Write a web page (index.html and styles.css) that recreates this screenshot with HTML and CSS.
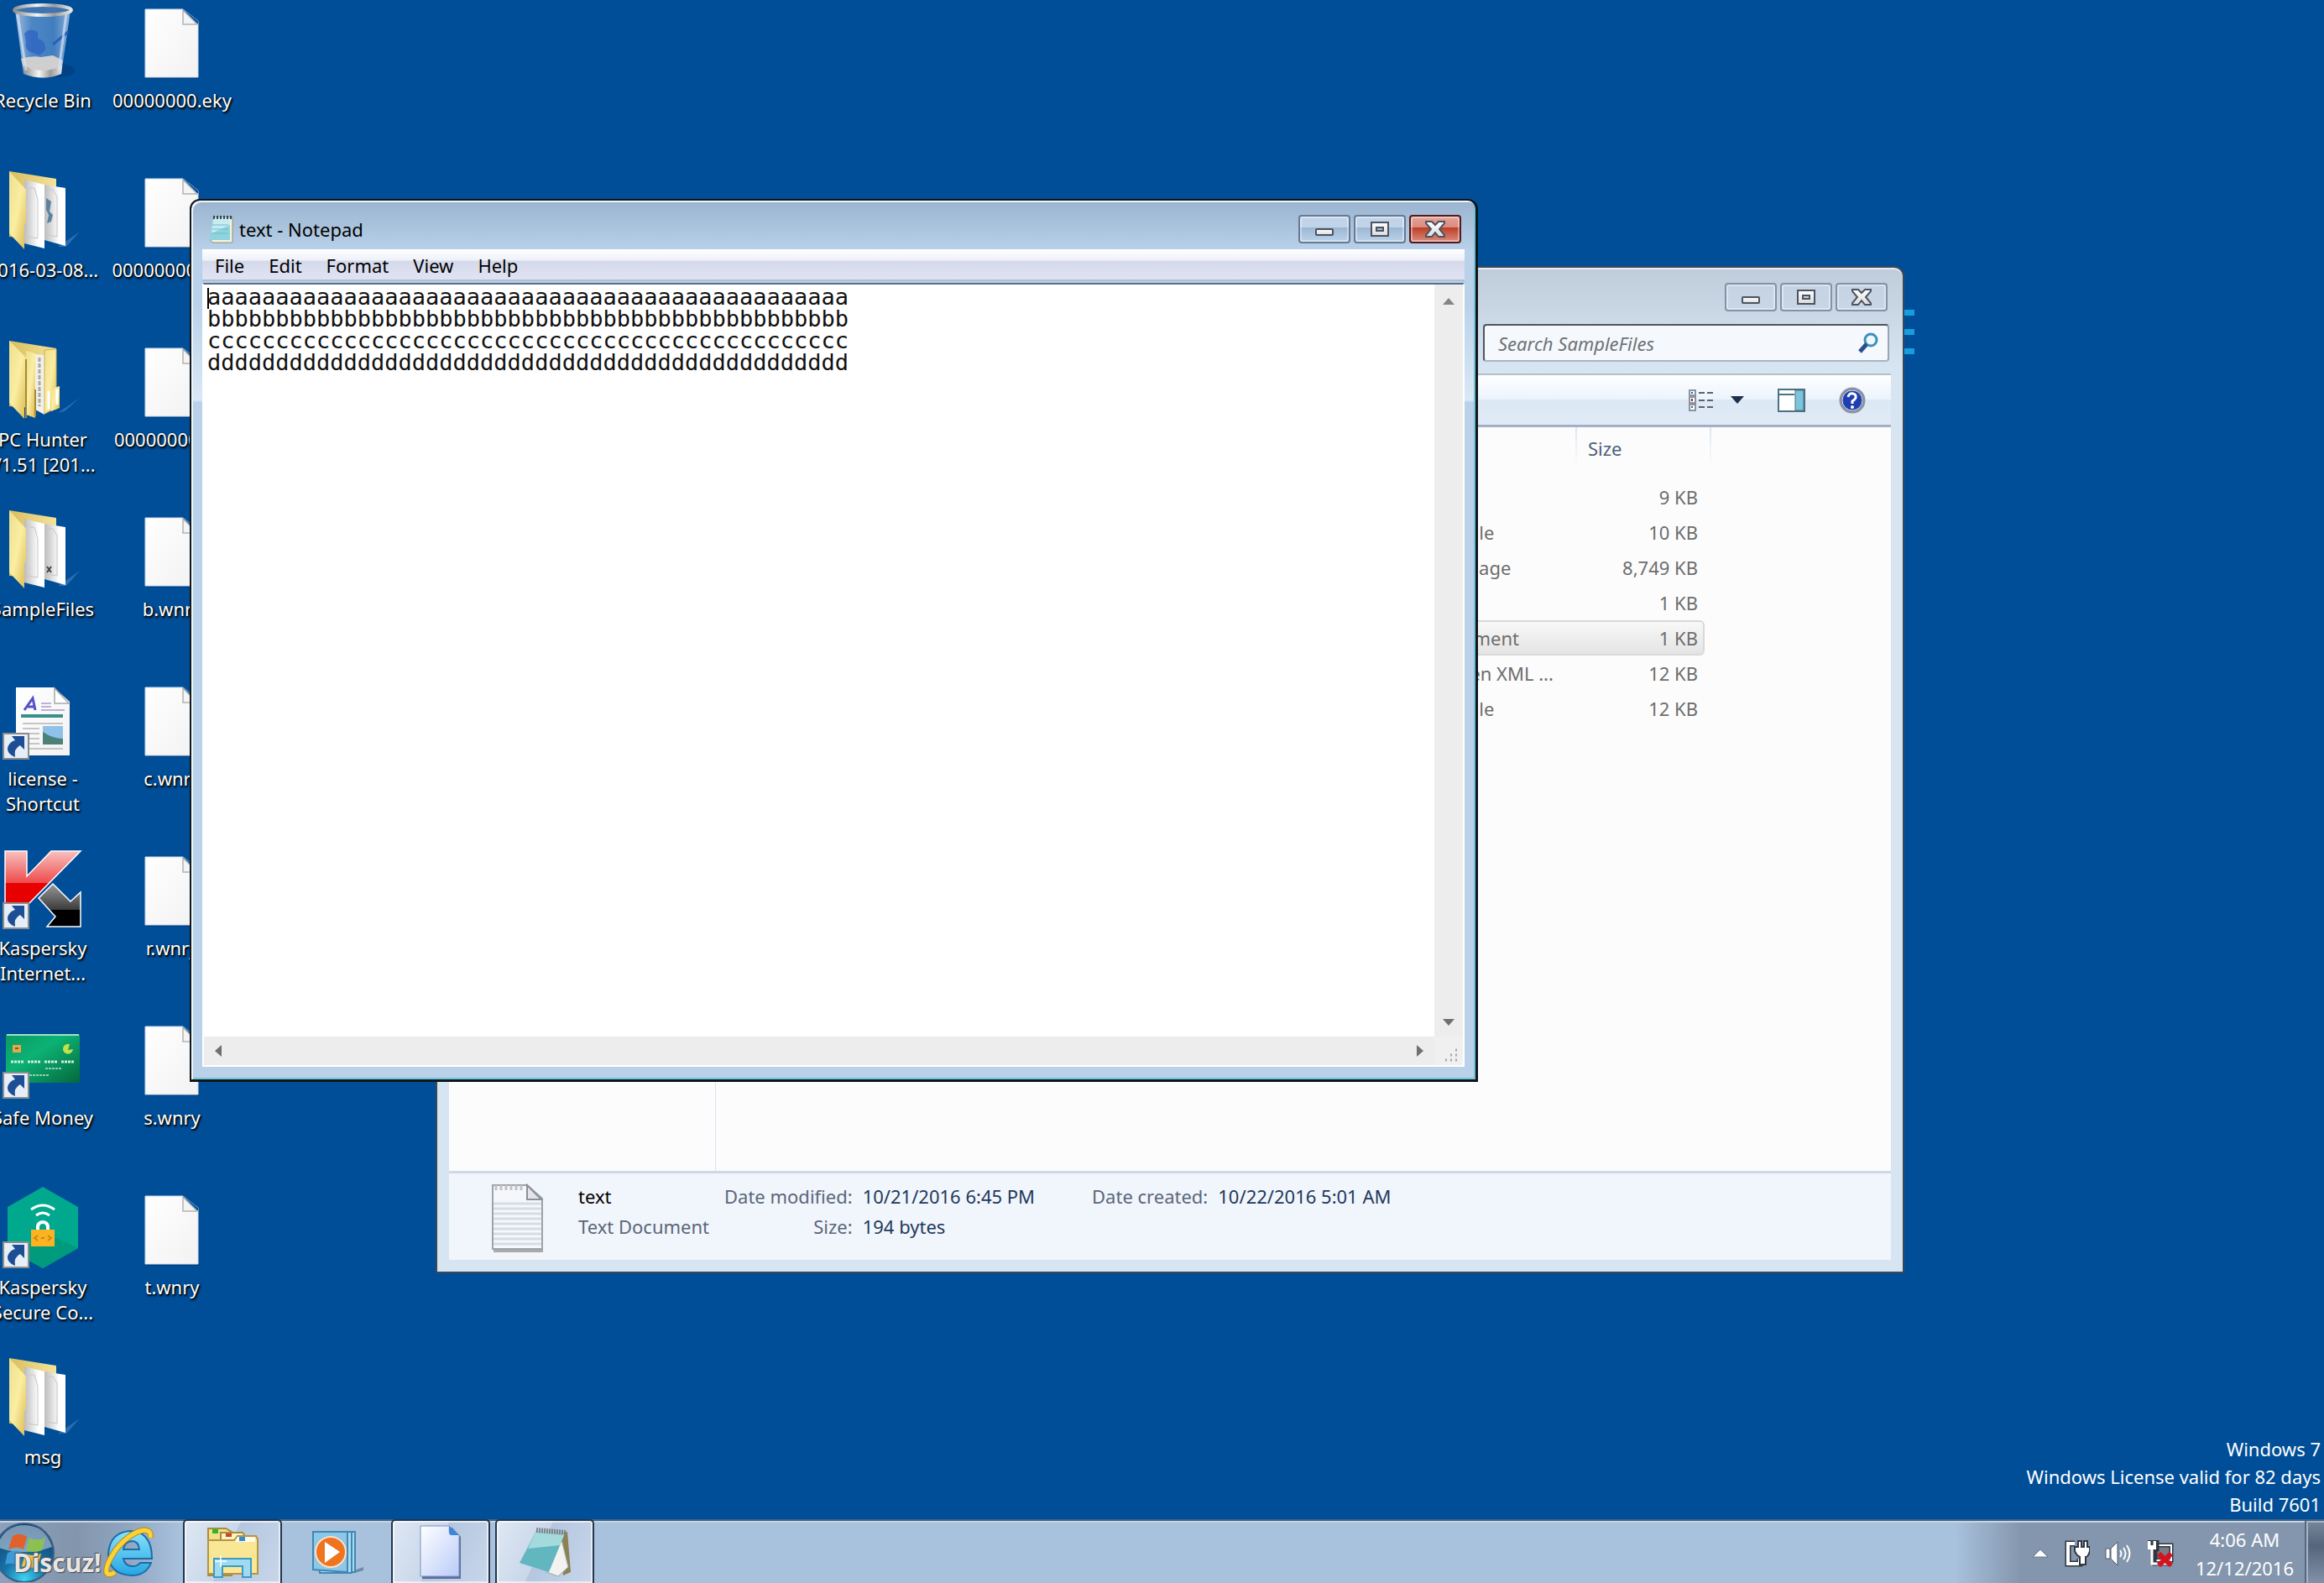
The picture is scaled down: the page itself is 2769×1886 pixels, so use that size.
FILE: index.html
```html
<!DOCTYPE html>
<html lang="en">

<head>
    <meta charset="UTF-8">
    <meta name="viewport" content="width=device-width, initial-scale=1.0">
    <title>Desktop</title>
    <link rel="stylesheet" href="styles.css">
</head>

<body>
    <!-- shared icons -->
    <svg class="defs" aria-hidden="true">
        <defs>
            <linearGradient id="gPaper" x1="0" y1="0" x2="1" y2="1">
                <stop offset="0" stop-color="#fff" />
                <stop offset="1" stop-color="#f3f2f2" />
            </linearGradient>
            <linearGradient id="gFolder" x1="0" y1="0" x2="1" y2="1">
                <stop offset="0" stop-color="#efdf8e" />
                <stop offset=".5" stop-color="#fbeea2" />
                <stop offset="1" stop-color="#dcb950" />
            </linearGradient>
            <linearGradient id="gFolderBack" x1="0" y1="0" x2="1" y2="0">
                <stop offset="0" stop-color="#d9be5c" />
                <stop offset="1" stop-color="#f3e39a" />
            </linearGradient>
            <linearGradient id="gSheet" x1="0" y1="0" x2="1" y2="0">
                <stop offset="0" stop-color="#bdbdbd" />
                <stop offset=".7" stop-color="#fff" />
                <stop offset="1" stop-color="#fff" />
            </linearGradient>
            <linearGradient id="gGlyph" x1="0" y1="0" x2="0" y2="1">
                <stop offset="0" stop-color="#fff" />
                <stop offset="1" stop-color="#dcdcdc" />
            </linearGradient>
        </defs>
        <symbol id="doc" viewBox="0 0 96 100">
            <path d="M17 12H62L80 27V94H17Z" fill="#00306a" opacity=".5" />
            <path d="M16 11H61L79 25V92H16Z" fill="url(#gPaper)" stroke="#c9dcf2" stroke-width="1" />
            <path d="M61 11L79 25V28H62Z" fill="#004e98" />
            <path d="M61 12V29H78Z" fill="#f4f4f4" stroke="#b3b3b3" stroke-width="1.5" />
        </symbol>
        <symbol id="shortcut" viewBox="0 0 32 32">
            <path d="M1 1H31V31H1Z" fill="#e6eef8" stroke="#8c8c8c" stroke-width="2" />
            <path d="M11 4H26V20L21 15Q13 19 15 29Q5 25 6 18Q8 11 15 9Z" fill="#1d4d94" />
        </symbol>
        <symbol id="folder" viewBox="0 0 96 100">
            <path d="M66 92L92 74L76 92Z" fill="#7fa9dc" opacity=".35" />
            <path d="M8 2L64 11V84L8 80Z" fill="url(#gFolderBack)" />
            <path d="M26 12L50 18V94L26 88Z" fill="url(#gSheet)" />
            <path d="M50 18L75 22V91L50 84Z" fill="url(#gSheet)" />
            <path d="M32 22L38 22L42 36V82L30 80M53 24L60 24L65 32V80L53 78" fill="none" stroke="#c6c6c6" stroke-width="1" />
            <path d="M8 2L28 24V62L26 66V95L8 76Z" fill="url(#gFolder)" />
        </symbol>
        <symbol id="min" viewBox="0 0 62 34">
            <rect x="21" y="17" width="20" height="7" rx="1" fill="url(#gGlyph)" stroke="#4b5361" stroke-width="2" />
        </symbol>
        <symbol id="max" viewBox="0 0 62 34">
            <path d="M21 9H41V25H21ZM27 15V19H35V15Z" fill="url(#gGlyph)" fill-rule="evenodd" stroke="#4b5361" stroke-width="2" />
        </symbol>
        <symbol id="close" viewBox="0 0 62 34">
            <path d="M20 8H27L31 12L35 8H42V10L36 17L42 24V26H35L31 21L27 26H20V24L26 17L20 10Z" fill="url(#gGlyph)" stroke="#4b5361" stroke-width="2" />
        </symbol>
    </svg>

    <main class="desktop">
        <nav class="icons" aria-label="Desktop icons">
            <a class="icon" href="#">
                <svg viewBox="0 0 96 100">
                    <defs>
                        <linearGradient id="gBin" x1="0" y1="0" x2="1" y2="0">
                            <stop offset="0" stop-color="#b8cfe8" />
                            <stop offset=".3" stop-color="#5a90cc" />
                            <stop offset=".7" stop-color="#4d86c6" />
                            <stop offset="1" stop-color="#a8c4e2" />
                        </linearGradient>
                        <linearGradient id="gRim" x1="0" y1="0" x2="1" y2="0">
                            <stop offset="0" stop-color="#8f8f8f" />
                            <stop offset=".4" stop-color="#f5f5f5" />
                            <stop offset=".7" stop-color="#9b9b9b" />
                            <stop offset="1" stop-color="#e8e8e8" />
                        </linearGradient>
                    </defs>
                    <ellipse cx="66" cy="84" rx="20" ry="8" fill="#003a78" opacity=".6" />
                    <path d="M15 12L25 88Q48 97 70 88L81 12Z" fill="url(#gBin)" opacity=".85" />
                    <path d="M26 40Q32 32 42 38V46Q52 48 51 60L44 66L34 62Q26 60 28 50Z" fill="#2b5fc2" opacity=".7" />
                    <path d="M60 53L78 38" stroke="#2562b8" stroke-width="3" />
                    <path d="M22 70Q34 66 46 68L60 66L72 72L70 82Q48 92 25 82Z" fill="#cfcfd0" />
                    <path d="M25 78Q48 90 71 78L70 88Q48 97 26 88Z" fill="url(#gRim)" />
                    <path d="M18 16L28 84M76 16L67 84" stroke="#d5e4f4" stroke-width="3" opacity=".7" />
                    <ellipse cx="48" cy="12" rx="34" ry="6" fill="#3f74b0" stroke="url(#gRim)" stroke-width="4" />
                </svg>
                <span>Recycle Bin</span>
            </a>
            <a class="icon" href="#">
                <svg viewBox="0 0 96 100">
                    <use href="#folder" />
                    <path d="M52 34L58 38L56 50L60 54L58 62L53 64L55 54L52 48Z" fill="#5d83a0" />
                </svg>
                <span>2016-03-08...</span>
            </a>
            <a class="icon" href="#">
                <svg viewBox="0 0 96 100">
                    <path d="M66 88L92 70L74 86Z" fill="#7fa9dc" opacity=".35" />
                    <path d="M8 2L64 11V84L8 80Z" fill="url(#gFolderBack)" />
                    <path d="M28 14L39 17V94L28 90Z" fill="url(#gFolder)" />
                    <path d="M39 18L50 19V90L39 84Z" fill="#f2f0ea" />
                    <path d="M44 22V80" stroke="#a9a9a2" stroke-width="3" stroke-dasharray="5 2" />
                    <path d="M50 13L64 12V82L50 89Z" fill="url(#gFolder)" stroke="#d0b050" />
                    <path d="M62 58L68 56V82L58 86V62Z" fill="url(#gFolder)" />
                    <path d="M55 62V84M65 60V78" stroke="#fff" stroke-width="3" />
                    <path d="M8 2L28 22V60L26 64V95L8 76Z" fill="url(#gFolder)" />
                    <path d="M28 24V94M39 60V92" stroke="#a88a35" stroke-width="2" />
                </svg>
                <span>PC Hunter V1.51 [201...</span>
            </a>
            <a class="icon" href="#">
                <svg viewBox="0 0 96 100">
                    <use href="#folder" />
                    <path d="M53 69L58 76M58 69L53 76" stroke="#444" stroke-width="2" />
                </svg>
                <span>SampleFiles</span>
            </a>
            <a class="icon" href="#">
                <svg viewBox="0 0 96 100">
                    <path d="M16 11H61L80 28V92H16Z" fill="url(#gPaper)" />
                    <path d="M62 12V30H79Z" fill="#fff" stroke="#a9a9a9" stroke-width="1.5" />
                    <path d="M26 38L36 24L39 38M30 34H38" fill="none" stroke="#5550c8" stroke-width="3" />
                    <path d="M46 30H58M46 34H58M46 38H74" stroke="#a79ad0" stroke-width="1.5" />
                    <rect x="22" y="43" width="50" height="4" fill="#3a8f8c" />
                    <path d="M24 54H72M24 60H44M24 66H44M24 72H44M24 78H44M24 84H72" stroke="#b5b5b5" stroke-width="1.5" />
                    <rect x="48" y="57" width="24" height="22" fill="#8fc1ea" />
                    <path d="M48 64Q60 72 72 72V79H48Z" fill="#4c8078" />
                    <use href="#shortcut" x="0" y="65" width="32" height="32" />
                </svg>
                <span>license - Shortcut</span>
            </a>
            <a class="icon" href="#">
                <svg viewBox="0 0 96 100">
                    <defs>
                        <linearGradient id="gRed" x1="0" y1="0" x2="0" y2="1">
                            <stop offset="0" stop-color="#f9c0c0" />
                            <stop offset=".62" stop-color="#ee4a4a" />
                            <stop offset=".62" stop-color="#e60000" />
                            <stop offset="1" stop-color="#e60000" />
                        </linearGradient>
                        <linearGradient id="gBlack" x1="0" y1="0" x2="0" y2="1">
                            <stop offset="0" stop-color="#9a9a9a" />
                            <stop offset=".6" stop-color="#3c3c3c" />
                            <stop offset=".6" stop-color="#000" />
                            <stop offset="1" stop-color="#000" />
                        </linearGradient>
                    </defs>
                    <path d="M3 4H29V34L58 4H93L32 66H3Z" fill="url(#gRed)" stroke="#fff" stroke-width="1.5" />
                    <path d="M43 60L60 43L81 64L93 53V94H53L63 82Z" fill="url(#gBlack)" stroke="#fff" stroke-width="1.5" />
                    <use href="#shortcut" x="0" y="65" width="32" height="32" />
                </svg>
                <span>Kaspersky Internet...</span>
            </a>
            <a class="icon" href="#">
                <svg viewBox="0 0 96 100">
                    <defs>
                        <linearGradient id="gCard" x1="0" y1="0" x2="1" y2="1">
                            <stop offset="0" stop-color="#0a9a62" />
                            <stop offset=".4" stop-color="#0cb274" />
                            <stop offset="1" stop-color="#04683c" />
                        </linearGradient>
                    </defs>
                    <rect x="4" y="20" width="88" height="58" rx="2" fill="url(#gCard)" />
                    <path d="M5 21H91" stroke="#9fe3c8" stroke-width="2" />
                    <rect x="12" y="33" width="10" height="9" fill="#e8a848" />
                    <path d="M15 37H19" stroke="#7b5a20" stroke-width="2" />
                    <path d="M80 32A6 6 0 1 0 84 38L78 39Z" fill="#c4e04a" />
                    <path d="M10 53H26M30 53H46M50 53H66M70 53H86" stroke="#cdeedd" stroke-width="3" stroke-dasharray="3 1" />
                    <path d="M51 61H70M32 69H56" stroke="#8fd0b2" stroke-width="2" stroke-dasharray="3 1" />
                    <use href="#shortcut" x="0" y="65" width="32" height="32" />
                </svg>
                <span>Safe Money</span>
            </a>
            <a class="icon" href="#">
                <svg viewBox="0 0 96 100">
                    <path d="M48 0L90 24V73L48 97L6 73V24Z" fill="#00a88e" />
                    <path d="M62 60L90 73L48 97L28 86V70Z" fill="#009a7c" />
                    <path d="M34 27Q48 17 62 27M40 34Q48 28 56 34" fill="none" stroke="#fff" stroke-width="3" />
                    <path d="M42 52V47Q43 42 48 42Q53 42 54 47V52" fill="none" stroke="#fff" stroke-width="4" />
                    <rect x="34" y="51" width="28" height="20" fill="#fbb322" />
                    <path d="M42 58L38 61L42 64M54 58L58 61L54 64M46 61H50" fill="none" stroke="#c78a10" stroke-width="2" />
                    <use href="#shortcut" x="0" y="65" width="32" height="32" />
                </svg>
                <span>Kaspersky Secure Co...</span>
            </a>
            <a class="icon" href="#">
                <svg viewBox="0 0 96 100"><use href="#folder" /></svg>
                <span>msg</span>
            </a>
            <a class="icon" href="#">
                <svg viewBox="0 0 96 100"><use href="#doc" /></svg>
                <span>00000000.eky</span>
            </a>
            <a class="icon" href="#">
                <svg viewBox="0 0 96 100"><use href="#doc" /></svg>
                <span>00000000.pky</span>
            </a>
            <a class="icon" href="#">
                <svg viewBox="0 0 96 100"><use href="#doc" /></svg>
                <span>00000000.res</span>
            </a>
            <a class="icon" href="#">
                <svg viewBox="0 0 96 100"><use href="#doc" /></svg>
                <span>b.wnry</span>
            </a>
            <a class="icon" href="#">
                <svg viewBox="0 0 96 100"><use href="#doc" /></svg>
                <span>c.wnry</span>
            </a>
            <a class="icon" href="#">
                <svg viewBox="0 0 96 100"><use href="#doc" /></svg>
                <span>r.wnry</span>
            </a>
            <a class="icon" href="#">
                <svg viewBox="0 0 96 100"><use href="#doc" /></svg>
                <span>s.wnry</span>
            </a>
            <a class="icon" href="#">
                <svg viewBox="0 0 96 100"><use href="#doc" /></svg>
                <span>t.wnry</span>
            </a>
        </nav>

        <!-- edge of the wallpaper drawing behind the explorer window -->
        <div class="ticks"><i></i><i></i><i></i></div>

        <section class="window explorer" aria-label="SampleFiles">
            <div class="titlebar">
                <div class="controls">
                    <button type="button" aria-label="Minimize"><svg><use href="#min" /></svg></button>
                    <button type="button" aria-label="Maximize"><svg><use href="#max" /></svg></button>
                    <button type="button" aria-label="Close"><svg><use href="#close" /></svg></button>
                </div>
            </div>
            <div class="searchbar">
                <label class="search">
                    <input type="text" placeholder="Search SampleFiles" aria-label="Search SampleFiles">
                    <svg viewBox="0 0 26 26">
                        <circle cx="16" cy="9" r="7" fill="#eef7fd" stroke="#3c8fc0" stroke-width="3" />
                        <path d="M11 14L3 23" stroke="#2b4f8e" stroke-width="5" />
                    </svg>
                </label>
            </div>
            <div class="toolbar">
                <button type="button" class="views" aria-label="Change your view">
                    <svg width="30" height="26" viewBox="0 0 30 26">
                        <path d="M1 1H8V7H1ZM1 9H8V16H1ZM1 18H8V25H1Z" fill="#fff" stroke="#8a93a0" stroke-width="2" />
                        <path d="M4 3V5M4 20V22" stroke="#2f5ea0" stroke-width="2" />
                        <path d="M4 11V14" stroke="#8c2f2f" stroke-width="2" />
                        <path d="M12 4H19M22 4H29M12 13H19M22 13H29M12 21H19M22 21H29" stroke="#5a6470" stroke-width="2" />
                    </svg>
                    <svg width="16" height="9" viewBox="0 0 16 9"><path d="M0 0H16L8 9Z" fill="#1c2f4c" /></svg>
                </button>
                <button type="button" aria-label="Show the preview pane">
                    <svg width="33" height="28" viewBox="0 0 33 28">
                        <rect x="1" y="1" width="31" height="26" fill="#fff" stroke="#4c7183" stroke-width="2" />
                        <path d="M2 7H20" stroke="#4c7183" stroke-width="2" />
                        <rect x="21" y="2" width="10" height="24" fill="#7cc4dc" stroke="#4c7183" stroke-width="1" />
                    </svg>
                </button>
                <button type="button" aria-label="Get help">
                    <svg width="32" height="32" viewBox="0 0 32 32">
                        <circle cx="16" cy="16" r="14" fill="#1f3fb0" stroke="#8d93a0" stroke-width="3" />
                        <circle cx="16" cy="16" r="12" fill="none" stroke="#dfe6f5" stroke-width="1" />
                        <path d="M11 12Q12 7 17 8Q21 9 20 13Q19 15 16 17V20" fill="none" stroke="#fff" stroke-width="3" />
                        <circle cx="16" cy="24" r="2" fill="#fff" />
                    </svg>
                </button>
            </div>
            <div class="content">
                <div class="tree"></div>
                <div class="list">
                    <table class="files">
                        <colgroup>
                            <col>
                            <col class="type">
                            <col class="size">
                            <col class="edge">
                        </colgroup>
                        <thead>
                            <tr>
                                <th>Name</th>
                                <th>Type</th>
                                <th colspan="2">Size</th>
                            </tr>
                        </thead>
                        <tbody>
                            <tr>
                                <td>data</td>
                                <td>Text</td>
                                <td>9 KB</td>
                            </tr>
                            <tr>
                                <td>document</td>
                                <td>Desktop File</td>
                                <td>10 KB</td>
                            </tr>
                            <tr>
                                <td>image</td>
                                <td>Bitmap Image</td>
                                <td>8,749 KB</td>
                            </tr>
                            <tr>
                                <td>notes</td>
                                <td>Text</td>
                                <td>1 KB</td>
                            </tr>
                            <tr class="selected">
                                <td>text</td>
                                <td>Text Document</td>
                                <td>1 KB</td>
                            </tr>
                            <tr>
                                <td>report</td>
                                <td>Office Open XML ...</td>
                                <td>12 KB</td>
                            </tr>
                            <tr>
                                <td>report</td>
                                <td>Desktop File</td>
                                <td>12 KB</td>
                            </tr>
                        </tbody>
                    </table>
                </div>
            </div>
            <div class="details">
                <svg class="thumb" viewBox="0 0 64 84">
                    <path d="M3 4H44L62 20V82H3Z" fill="#aaa" />
                    <path d="M2 2H43L61 18V78H2Z" fill="#f5f7fa" stroke="#9da3aa" stroke-width="2" />
                    <path d="M3 24H60M3 30H60M3 36H60M3 42H60M3 48H60M3 54H60M3 60H60M3 66H60M3 72H60" stroke="#d5dce8" stroke-width="3" />
                    <path d="M43 2V19H60Z" fill="#e2e4e8" stroke="#8c9095" stroke-width="2" />
                    <path d="M6 2V8M12 2V8M18 2V8M24 2V8M30 2V8M36 2V8" stroke="#c2c2c2" stroke-width="3" />
                </svg>
                <div class="group name">
                    <strong>text</strong>
                    <span>Text Document</span>
                </div>
                <dl class="group">
                    <dt>Date modified:</dt>
                    <dd>10/21/2016 6:45 PM</dd>
                    <dt>Size:</dt>
                    <dd>194 bytes</dd>
                </dl>
                <dl class="group">
                    <dt>Date created:</dt>
                    <dd>10/22/2016 5:01 AM</dd>
                </dl>
            </div>
        </section>

        <section class="window notepad" aria-label="text - Notepad">
            <div class="titlebar">
                <svg class="app" viewBox="0 0 30 34">
                    <path d="M6 3H29V33H5L3 30Z" fill="#f4f1dc" stroke="#8f9078" stroke-width="1" />
                    <path d="M6 3H26V30H1Z" fill="#8fd3de" />
                    <path d="M6 3H26V12L4 22Z" fill="#c5ecf1" />
                    <path d="M5 12H24M5 17H24M4 22H24" stroke="#6fbccb" stroke-width="1" />
                    <path d="M7 1V5M11 1V5M15 1V5M19 1V5M23 1V5M27 1V5" stroke="#3c474c" stroke-width="2" />
                </svg>
                <h1>text - Notepad</h1>
                <div class="controls">
                    <button type="button" aria-label="Minimize"><svg><use href="#min" /></svg></button>
                    <button type="button" aria-label="Maximize"><svg><use href="#max" /></svg></button>
                    <button type="button" class="close" aria-label="Close"><svg><use href="#close" /></svg></button>
                </div>
            </div>
            <div class="menubar">
                <button type="button">File</button>
                <button type="button">Edit</button>
                <button type="button">Format</button>
                <button type="button">View</button>
                <button type="button">Help</button>
            </div>
            <div class="editor">
                <textarea aria-label="Document text" spellcheck="false">aaaaaaaaaaaaaaaaaaaaaaaaaaaaaaaaaaaaaaaaaaaaaaa
bbbbbbbbbbbbbbbbbbbbbbbbbbbbbbbbbbbbbbbbbbbbbbb
ccccccccccccccccccccccccccccccccccccccccccccccc
ddddddddddddddddddddddddddddddddddddddddddddddd</textarea>
                <div class="scroll vertical">
                    <button type="button" aria-label="Scroll up"><svg width="14" height="8" viewBox="0 0 14 8"><path d="M7 0L14 8H0Z" fill="#858585" /></svg></button>
                    <button type="button" aria-label="Scroll down"><svg width="14" height="8" viewBox="0 0 14 8"><path d="M0 0H14L7 8Z" fill="#707070" /></svg></button>
                </div>
                <div class="scroll horizontal">
                    <button type="button" aria-label="Scroll left"><svg width="8" height="14" viewBox="0 0 8 14"><path d="M8 0V14L0 7Z" fill="#707070" /></svg></button>
                    <button type="button" aria-label="Scroll right"><svg width="8" height="14" viewBox="0 0 8 14"><path d="M0 0L8 7L0 14Z" fill="#707070" /></svg></button>
                </div>
                <svg class="grip" viewBox="0 0 34 34"><path d="M25 16h2M19 22h2M25 22h2M13 28h2M19 28h2M25 28h2" stroke="#a8a8a8" stroke-width="3" /></svg>
            </div>
        </section>

        <p class="watermark">Windows 7<br>Windows License valid for 82 days<br>Build 7601</p>
    </main>

    <footer class="taskbar">
        <button type="button" class="start" aria-label="Start">
            <svg viewBox="0 0 68 72">
                <defs>
                    <radialGradient id="gOrb" cx=".5" cy=".95" r=".9">
                        <stop offset="0" stop-color="#3ed4f5" />
                        <stop offset=".4" stop-color="#1674a8" />
                        <stop offset="1" stop-color="#123f6c" />
                    </radialGradient>
                </defs>
                <circle cx="29" cy="37" r="35" fill="url(#gOrb)" stroke="#3a5f83" stroke-width="2" />
                <path d="M-4 30Q5 4 29 4Q54 4 62 30Q28 42 -4 30Z" fill="#cfdfec" opacity=".55" />
                <path d="M15 17Q24 12 32 18L28 33Q20 28 10 33Z" fill="#e2602a" />
                <path d="M35 19Q44 24 54 19L50 34Q40 38 31 34Z" fill="#8cc152" />
                <path d="M9 37Q19 32 27 37L23 52Q14 48 6 51Z" fill="#3c9ad8" />
                <path d="M30 38Q40 42 49 38L45 53Q35 57 26 53Z" fill="#f5c33b" />
            </svg>
            <span class="brand">Discuz!</span>
        </button>
        <button type="button" class="task" aria-label="Internet Explorer">
            <svg viewBox="0 0 64 64">
                <defs>
                    <linearGradient id="gIe" x1="0" y1="0" x2="0" y2="1">
                        <stop offset="0" stop-color="#8be3fb" />
                        <stop offset="1" stop-color="#25a5e4" />
                    </linearGradient>
                </defs>
                <path d="M60 40H26Q28 49 37 49Q43 49 46 45H59Q53 60 36 60Q9 59 8 34Q10 8 35 7Q60 8 60 40ZM26 29H45Q44 19 36 19Q27 20 26 29Z" fill="url(#gIe)" stroke="#1c6ca8" stroke-width="2" fill-rule="evenodd" />
                <path d="M58 15Q60 6 50 6Q34 9 18 28Q4 48 6 57Q9 61 16 56" fill="none" stroke="#b98a14" stroke-width="7" />
                <path d="M58 15Q60 6 50 6Q34 9 18 28Q4 48 6 57Q9 61 16 56" fill="none" stroke="#fbd338" stroke-width="5" />
            </svg>
        </button>
        <button type="button" class="task open" aria-label="Windows Explorer">
            <svg viewBox="0 0 64 64">
                <path d="M3 4H24L31 8V60H3Z" fill="#f5df8a" stroke="#a88c3c" stroke-width="2" />
                <path d="M18 9H44L47 13V24H18Z" fill="#fdf3c4" stroke="#a88c3c" stroke-width="2" />
                <path d="M3 18H34L38 13H60L62 17V58H3Z" fill="#f9e795" stroke="#b39645" stroke-width="2" />
                <rect x="8" y="5" width="7" height="5" fill="#2db52d" />
                <rect x="24" y="10" width="7" height="4" fill="#cc4325" />
                <path d="M38 14H59V20H35Z" fill="#fffbe8" />
                <rect x="40" y="14" width="7" height="5" fill="#2c8fd0" />
                <path d="M10 62V40H54V62H44V49H20V62Z" fill="#9fdbf0" stroke="#3d9ac4" stroke-width="2" />
                <path d="M18 36V50M11 43H25" stroke="#fff" stroke-width="2" opacity=".8" />
            </svg>
        </button>
        <button type="button" class="task" aria-label="Windows Media Player">
            <svg viewBox="0 0 64 64">
                <path d="M53 54L64 50V54L53 57Z" fill="#6f89a8" />
                <path d="M16 8H54V56H16Z" fill="#a9daf0" stroke="#3f88b4" stroke-width="2" />
                <path d="M12 8H50V57H12Z" fill="#a9daf0" stroke="#3f88b4" stroke-width="2" />
                <path d="M4 8H45V56L4 53Z" fill="#8cc7e8" stroke="#3f88b4" stroke-width="2" />
                <circle cx="25" cy="32" r="18" fill="#ee7420" stroke="#fce0c6" stroke-width="2" />
                <path d="M18 20L36 32L18 45Z" fill="#fff" />
            </svg>
        </button>
        <button type="button" class="task open" aria-label="Document">
            <svg viewBox="0 0 64 64">
                <defs>
                    <linearGradient id="gPage" x1="0" y1="0" x2="1" y2="1">
                        <stop offset="0" stop-color="#fff" />
                        <stop offset="1" stop-color="#b9cbf8" />
                    </linearGradient>
                </defs>
                <path d="M10 3H46L56 14V64H10Z" fill="#5c6f9c" />
                <path d="M8 1H42L54 12V61H8Z" fill="url(#gPage)" stroke="#7c8fbc" stroke-width="1" />
                <path d="M42 1L54 12H44Q41 12 42 1Z" fill="#3f86d8" />
            </svg>
        </button>
        <button type="button" class="task open" aria-label="text - Notepad">
            <svg viewBox="0 0 64 64">
                <path d="M50 10L59 8L63 56L54 60Z" fill="#8d8152" />
                <path d="M50 9L60 50L48 61L34 56Z" fill="#f2f2f0" stroke="#9aa" stroke-width="1" />
                <path d="M22 7L56 10L37 56L2 45Z" fill="#62b6c0" />
                <path d="M22 7L56 10L50 24L12 28Z" fill="#a5dadd" />
                <path d="M22 6L57 9" stroke="#7c8588" stroke-width="6" stroke-dasharray="2 1" />
            </svg>
        </button>

        <div class="tray">
            <button type="button" class="more" aria-label="Show hidden icons"><svg width="18" height="10" viewBox="0 0 18 10"><path d="M9 0L18 9H0Z" fill="#fff" stroke="#66788e" stroke-width="1" /></svg></button>
            <button type="button" aria-label="Power">
                <svg width="30" height="32" viewBox="0 0 30 32">
                    <path d="M12 4H4V28H18V22" fill="#8496ad" stroke="#2f3742" stroke-width="7" />
                    <path d="M12 4H4V28H18V22" fill="none" stroke="#fff" stroke-width="4" />
                    <path d="M16 1H20V8H23V1H27V8H30V13Q28 20 25 20V29H18V20Q14 18 12 13V8H16Z" fill="#fff" stroke="#2f3742" stroke-width="2" />
                </svg>
            </button>
            <button type="button" aria-label="Volume">
                <svg width="32" height="30" viewBox="0 0 32 30">
                    <path d="M1 9H6V21H1ZM7 9L15 1V29L7 21Z" fill="#fff" stroke="#4c5868" stroke-width="1" />
                    <path d="M18 11Q21 15 18 19M22 8Q27 15 22 22M26 5Q33 15 26 25" fill="none" stroke="#fff" stroke-width="2" />
                </svg>
            </button>
            <button type="button" aria-label="Network">
                <svg width="32" height="32" viewBox="0 0 32 32">
                    <path d="M10 6H29V24H10Z" fill="#777c86" stroke="#2f3742" stroke-width="5" />
                    <path d="M10 6H29V24H10Z" fill="none" stroke="#fff" stroke-width="2" />
                    <path d="M1 0H12V11H9V28H30" fill="none" stroke="#2f3742" stroke-width="5" />
                    <path d="M1 1H11V11H1Z" fill="#fff" />
                    <path d="M6 1V6" stroke="#2f3742" stroke-width="3" />
                    <path d="M6 11V28H30" fill="none" stroke="#fff" stroke-width="3" />
                    <path d="M14 16L29 30M29 16L14 30" stroke="#d31420" stroke-width="6" />
                </svg>
            </button>
            <button type="button" class="clock"><time datetime="04:06">4:06 AM</time><time datetime="2016-12-12">12/12/2016</time></button>
            <button type="button" class="peek" aria-label="Show desktop"></button>
        </div>
    </footer>
</body>

</html>
```
FILE: styles.css
```css
* {
    margin: 0;
    padding: 0;
    box-sizing: border-box
}

body {
    display: flex;
    flex-direction: column;
    height: 100vh;
    overflow: hidden;
    font: 22px/30px "Noto Sans", "Open Sans", sans-serif;
    background: #004e98
}

button,
input,
textarea {
    font: inherit;
    color: inherit;
    border: 0;
    background: none
}

svg {
    display: block
}

.defs {
    position: absolute;
    width: 0;
    height: 0
}

/* desktop */
.desktop {
    position: relative;
    flex: 1;
    min-height: 0;
    overflow: hidden
}

.icons {
    display: grid;
    grid-template-rows: repeat(9, 202px);
    grid-auto-columns: 154px;
    grid-auto-flow: column;
    margin-left: -26px
}

.icon {
    display: flex;
    flex-direction: column;
    align-items: center;
    gap: 4px;
    color: #fff;
    text-align: center;
    text-decoration: none;
    text-shadow: 1px 2px 3px #000, 1px 1px 2px #000
}

.icon svg {
    width: 96px;
    height: 100px
}

.icon span {
    width: 148px
}

.ticks {
    position: absolute;
    top: 369px;
    right: 488px;
    display: grid;
    gap: 16px
}

.ticks i {
    width: 14px;
    height: 7px;
    background: #159fe0
}

.watermark {
    position: absolute;
    right: 4px;
    bottom: 1px;
    line-height: 33px;
    color: #fff;
    text-align: right
}

/* windows */
.window {
    position: absolute;
    display: flex;
    flex-direction: column;
    padding: 0 13px 14px;
    border: 2px solid #3c4856;
    border-radius: 12px 12px 0 0
}

.titlebar {
    display: flex;
    align-items: center;
    gap: 7px;
    padding: 10px 4px 0 7px
}

.titlebar h1 {
    font-size: 22px;
    font-weight: normal
}

.app {
    width: 30px;
    height: 34px
}

.controls {
    display: flex;
    gap: 4px;
    margin-left: auto
}

.controls button {
    width: 62px;
    height: 34px;
    border: 2px solid #8292a8;
    border-radius: 4px;
    box-shadow: inset 0 0 0 2px rgba(255, 255, 255, .4);
    background: rgba(200, 213, 232, .5)
}

.controls svg {
    width: 62px;
    height: 34px;
    margin: -2px
}

/* explorer */
.explorer {
    top: 317px;
    right: 500px;
    bottom: 293px;
    left: 519px;
    padding: 0 14px 14px;
    color: #6d6d6d;
    background: linear-gradient(#bfccd9, #d7e4f1 120px);
    box-shadow: inset 0 2px 0 #e4ecf4
}

.explorer .titlebar {
    height: 59px
}

.searchbar {
    display: flex;
    justify-content: flex-end;
    padding: 8px 2px 14px
}

.search {
    display: flex;
    align-items: center;
    width: 484px;
    height: 45px;
    padding: 0 10px 0 16px;
    border: 2px solid #a9b4c0;
    border-color: #50565e #9aa5b2 #a9b4c0 #50565e;
    border-radius: 4px;
    background: #f5f9fd
}

.search input {
    flex: 1;
    min-width: 0;
    outline: 0
}

.search input::placeholder {
    font-style: italic;
    color: #6e7275
}

.search svg {
    width: 26px;
    height: 26px
}

.toolbar {
    display: flex;
    align-items: center;
    justify-content: flex-end;
    gap: 40px;
    height: 64px;
    padding-right: 30px;
    border-top: 2px solid #b5bfcc;
    border-bottom: 3px solid #a3b1c6;
    background: linear-gradient(#fff, #eaf3fc 50%, #dde8f5 50%, #e0ebf7)
}

.views {
    display: flex;
    align-items: center;
    gap: 20px
}

.content {
    display: flex;
    flex: 1;
    min-height: 0;
    background: #fcfcfc
}

.tree {
    width: 318px;
    border-right: 1px solid #d5e3f1
}

.list {
    flex: 1
}

.files {
    width: 1186px;
    table-layout: fixed;
    border-collapse: separate;
    border-spacing: 0
}

.files .type {
    width: 242px
}

.files .size {
    width: 152px
}

.files .edge {
    width: 8px
}

.files th {
    height: 46px;
    padding: 3px 0 0 13px;
    font-weight: normal;
    text-align: left;
    color: #4c607a;
    border-right: 2px solid;
    border-image: linear-gradient(#dde6f0, #fcfcfc) 1
}

.files td {
    height: 42px;
    padding-left: 17px;
    white-space: nowrap
}

.files td:last-child {
    padding-right: 6px;
    border-right: 2px solid transparent;
    text-align: right
}

.files tbody::before {
    content: "";
    display: block;
    height: 16px
}

.files .selected td {
    border: 0 solid #d9d9d9;
    border-width: 2px 0;
    background: linear-gradient(#f8f8f8, #e4e4e4)
}

.files .selected td:last-child {
    border-right-width: 2px;
    border-radius: 0 6px 6px 0
}

.details {
    display: flex;
    align-items: flex-start;
    height: 106px;
    padding: 12px 0 0 50px;
    color: #5a6779;
    border-top: 3px solid #cfd8e4;
    background: #f1f5fc
}

.thumb {
    width: 64px;
    height: 84px
}

.group {
    display: grid;
    grid-template-columns: auto auto;
    gap: 6px 12px;
    margin-left: 68px
}

.group.name {
    grid-template-columns: auto;
    margin-left: 40px
}

.group + .group:not(:last-child) {
    margin-left: 18px
}

.group strong {
    font-weight: normal;
    color: #000
}

.group dt {
    text-align: right
}

.group dd {
    color: #1e395b
}

/* notepad */
.notepad {
    top: 237px;
    right: 1008px;
    bottom: 521px;
    left: 226px;
    padding-bottom: 15px;
    border-color: #10161c;
    border-right-width: 3px;
    border-bottom-width: 3px;
    background: linear-gradient(#9ab4d0, #b9d1e9 60px, #b9d1e9 120px, #dae8f6 238px, #b9d1e9 240px);
    box-shadow: inset 2px 2px 0 #eef5fc, inset -2px -2px 0 #72c4d8
}

.notepad .titlebar {
    height: 58px
}

.notepad .controls button {
    border-color: #667a94;
    background: linear-gradient(#c1d3e9 45%, #9db7d3 45%, #bcd2ea)
}

.notepad .controls .close {
    border-color: #53191c;
    background: linear-gradient(#e5a296, #d98a7d 45%, #bd3e28 45%, #dc8c7c)
}

.menubar {
    display: flex;
    height: 38px;
    padding-top: 2px;
    border-bottom: 2px solid #b4bdd0;
    background: linear-gradient(#fff, #eff1f9 36%, #d5daeb 40%, #e0e3f3)
}

.menubar button {
    padding: 0 14px 0 15px
}

.editor {
    display: grid;
    flex: 1;
    min-height: 0;
    grid-template-columns: 1fr 34px;
    grid-template-rows: 1fr 34px;
    margin-top: 2px;
    border: 2px solid #fff;
    border-top-color: #55708c;
    background: #f0f0f0
}

.editor textarea {
    padding: 2px 4px;
    font: 27px/26px "DejaVu Sans Mono", monospace;
    color: #111;
    resize: none;
    outline: 0;
    overflow: hidden;
    /* caret at the first character */
    background: linear-gradient(#000, #000) 4px 4px / 2px 25px no-repeat #fff
}

.scroll {
    display: flex;
    justify-content: space-between;
    background: #ededed
}

.scroll.vertical {
    flex-direction: column;
    padding-top: 3px
}

.scroll button {
    display: grid;
    place-items: center;
    width: 34px;
    height: 34px
}

.grip {
    width: 34px;
    height: 34px
}

/* taskbar */
.taskbar {
    display: flex;
    height: 76px;
    border-top: 2px solid #45617f;
    box-shadow: inset 0 2px 0 #c3d4e6;
    background: linear-gradient(90deg, #8ba1bd, #8295ac 90px, #8fa5c0 150px, #a8c1dd 215px, #a8c1dd calc(100% - 440px), #8496ad calc(100% - 360px), #8496ad)
}

.start {
    position: relative;
    width: 94px
}

.start svg {
    width: 68px;
    height: 72px
}

.brand {
    position: absolute;
    left: 16px;
    top: 30px;
    font: bold 30px/40px "Open Sans", "Noto Sans", sans-serif;
    color: #e6e6e6;
    text-shadow: 1px 1px 1px #444, -1px -1px 1px #555
}

.task {
    display: grid;
    place-items: center;
    width: 118px;
    margin-right: 6px
}

.task svg {
    width: 64px;
    height: 64px
}

.task.open {
    margin-top: -2px;
    border: 2px solid #24364d;
    border-bottom: 0;
    border-radius: 5px 5px 0 0;
    box-shadow: inset 0 0 0 2px rgba(255, 255, 255, .6);
    background: linear-gradient(115deg, #dfe8f4, #c9d7e9 45%, #b4c7df 46%, #c8d6ea)
}

.tray {
    display: flex;
    align-items: center;
    gap: 18px;
    padding-top: 3px;
    margin-left: auto;
    color: #fff
}

.more {
    margin-right: 2px
}

.clock {
    display: grid;
    margin: 0 -5px 0 8px;
    line-height: 34px
}

.peek {
    align-self: stretch;
    width: 23px;
    margin-top: -3px;
    border-left: 2px solid #56677e;
    box-shadow: inset 2px 2px 0 #a5b4c6;
    background: linear-gradient(#77869a, #55657c 40%, #8091a8)
}
```
